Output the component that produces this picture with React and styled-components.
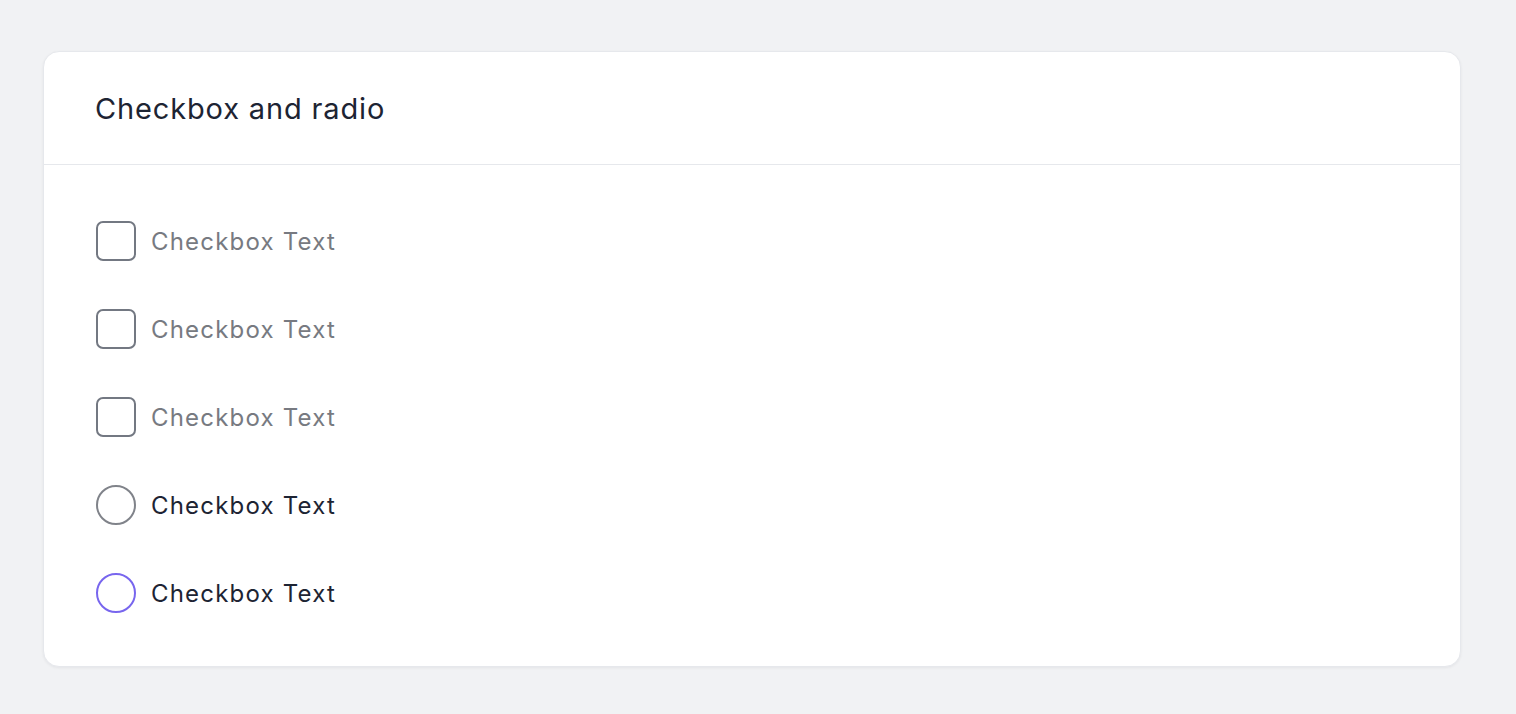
import React from 'react'
import styled, { createGlobalStyle } from 'styled-components'

const GlobalStyle = createGlobalStyle`
  html, body {
    margin: 0;
    padding: 0;
    background: #f1f2f4;
    font-family: Inter, "Noto Sans", sans-serif;
  }
`;

const Page = styled.div`
  padding: 51px 55px 48px 43px;
  min-height: 714px;
  box-sizing: border-box;
`;

const Card = styled.div`
  background: #ffffff;
  border: 1px solid #e6e8ec;
  border-radius: 16px;
  box-shadow: 0 1px 3px rgba(16, 24, 40, 0.06);
  overflow: hidden;
`;

const Header = styled.div`
  height: 112px;
  display: flex;
  align-items: center;
  padding: 0 51px;
  border-bottom: 1px solid #e6e8ec;
`;

const Title = styled.h2`
  margin: 0;
  font-size: 29px;
  font-weight: 400;
  color: #1d2433;
  letter-spacing: 0.85px;
`;

const Body = styled.div`
  display: flex;
  flex-direction: column;
  gap: 48px;
  padding: 56px 52px 53px;
`;

const Option = styled.label`
  display: flex;
  align-items: center;
  gap: 15px;
  height: 40px;
  cursor: pointer;
`;

const Box = styled.span`
  width: 40px;
  height: 40px;
  flex: none;
  border: 2px solid ${({ $color }) => $color || '#737882'};
  border-radius: ${({ $round }) => ($round ? '50%' : '7px')};
  box-sizing: border-box;
`;

const Label = styled.span`
  font-size: 24px;
  letter-spacing: 1.2px;
  color: ${({ $muted }) => ($muted ? '#777a81' : '#1d2433')};
`;

const options = [
  { round: false, muted: true },
  { round: false, muted: true },
  { round: false, muted: true },
  { round: true, muted: false, color: '#80838a' },
  { round: true, muted: false, color: '#7866ee' },
];

const App = () => {
  return (
    <>
      <GlobalStyle />
      <Page>
        <Card>
          <Header>
            <Title>Checkbox and radio</Title>
          </Header>
          <Body>
            {options.map((o, i) => (
              <Option key={i}>
                <Box $round={o.round} $color={o.color} />
                <Label $muted={o.muted}>Checkbox Text</Label>
              </Option>
            ))}
          </Body>
        </Card>
      </Page>
    </>
  )
}

export default App
